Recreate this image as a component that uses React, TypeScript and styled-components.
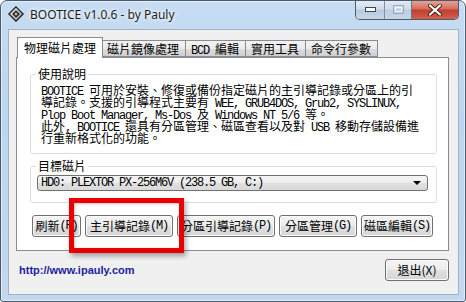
import React from 'react';
import styled, { createGlobalStyle } from 'styled-components';

const Global = createGlobalStyle`
  html, body { margin: 0; padding: 0; background: #ffffff; }
  * { box-sizing: border-box; }
  body { text-autospace: no-autospace; text-spacing-trim: space-all; }
`;

const CJK = `"Noto Sans CJK TC", "Noto Sans CJK SC", sans-serif`;

const Window = styled.div`
  position: relative;
  width: 466px;
  height: 302px;
  display: flex;
  flex-direction: column;
  padding: 0 6px 6px 7px;
  border: 1px solid #4a5a6d;
  border-radius: 7px 7px 3px 3px;
  background: linear-gradient(180deg, #c6dcf2 0, #bdd5ee 40%, #c3d8ef 100%);
  box-shadow: inset 0 0 0 1px rgba(255, 255, 255, 0.55);
  overflow: hidden;
`;

const TitleBar = styled.div`
  display: flex;
  align-items: flex-start;
  height: 28px;
`;

const AppIcon = styled.svg`
  margin-top: 5px;
  flex: none;
`;

const Title = styled.div`
  margin: 6px 0 0 6px;
  font-family: "Noto Sans", "Open Sans", sans-serif;
  font-size: 12px;
  line-height: 16px;
  color: #1b1b1b;
  text-shadow: 0 0 6px #ffffff, 0 0 3px #ffffff;
`;

const Controls = styled.div`
  display: flex;
  margin: -1px 0 0 auto;
  height: 20px;
  border: 1px solid #4f5b6c;
  border-top: none;
  border-radius: 0 0 5px 5px;
  overflow: hidden;
`;

const CtrlBtn = styled.div<{ w: number; kind?: 'close' | 'off' }>`
  width: ${({ w }) => w}px;
  display: flex;
  align-items: center;
  justify-content: center;
  border-left: ${({ kind }) => (kind ? '1px solid #6a7687' : 'none')};
  background: ${({ kind }) =>
    kind === 'close'
      ? 'linear-gradient(180deg, #e9a99b 0, #d4705f 45%, #c0402d 55%, #d0614e 100%)'
      : 'linear-gradient(180deg, #e6eef7 0, #d1dceb 45%, #b9c9dd 55%, #c8d6e7 100%)'};
  opacity: ${({ kind }) => (kind === 'off' ? 0.75 : 1)};
`;

const Client = styled.div`
  flex: 1;
  display: flex;
  flex-direction: column;
  padding: 7px 9px 0 7px;
  background: #f0f0f0;
  border: 1px solid #9fb2c7;
`;

const TabStrip = styled.div`
  display: flex;
  align-items: flex-end;
  height: 20px;
  padding-left: 1px;
  position: relative;
  z-index: 1;
`;

const Tab = styled.div<{ active?: boolean }>`
  height: ${({ active }) => (active ? 21 : 17)}px;
  margin-bottom: ${({ active }) => (active ? -1 : 0)}px;
  margin-right: ${({ active }) => (active ? -1 : 0)}px;
  padding: ${({ active }) => (active ? '3px 6px 0' : '1px 6px 0 5px')};
  border: 1px solid #898c95;
  border-bottom: ${({ active }) => (active ? 'none' : '1px solid #898c95')};
  border-left-width: ${({ active }) => (active ? 1 : 0)}px;
  background: ${({ active }) =>
    active ? '#ffffff' : 'linear-gradient(180deg, #f2f2f2 0, #ebebeb 50%, #dddddd 51%, #cfcfcf 100%)'};
  font-family: ${CJK};
  font-size: 12px;
  line-height: 14px;
  color: #000000;
  white-space: pre;
  position: relative;
  z-index: ${({ active }) => (active ? 2 : 1)};
`;

const Panel = styled.div`
  display: flex;
  flex-direction: column;
  padding: 9px 11px 13px 13px;
  background: #ffffff;
  border: 1px solid #898c95;
`;

const Group = styled.fieldset<{ pad: string }>`
  margin: 0;
  min-width: 0;
  padding: ${({ pad }) => pad};
  border: 1px solid #d5dfe5;
  border-radius: 3px;
  & + & {
    margin-top: 5px;
  }
`;

const Legend = styled.legend`
  padding: 0 2px;
  font-family: ${CJK};
  font-size: 12px;
  line-height: 14px;
  color: #000000;
`;

// half-width latin run, 6px per character like the dialog's bitmap font
const Lat = styled.span`
  font-family: "Liberation Mono", monospace;
  font-size: 12px;
  letter-spacing: -1.2px;
  line-height: 0;
`;

const Desc = styled.div`
  margin-left: 5px;
  font-family: ${CJK};
  font-size: 12px;
  line-height: 12px;
  color: #000000;
  white-space: pre;
`;

const Combo = styled.div`
  display: flex;
  align-items: center;
  height: 16px;
  margin: 0 3px 0 1px;
  padding: 0 6px 0 3px;
  border: 1px solid #707070;
  border-radius: 3px;
  background: linear-gradient(180deg, #f5f5f5 0, #ececec 50%, #e0e0e0 51%, #d9d9d9 100%);
  font-family: "Liberation Mono", monospace;
  font-size: 12px;
  letter-spacing: -1.2px;
  color: #000000;
  white-space: pre;
`;

const Arrow = styled.span`
  margin-left: auto;
  width: 0;
  height: 0;
  border-left: 4px solid transparent;
  border-right: 4px solid transparent;
  border-top: 4px solid #000000;
`;

const ButtonRow = styled.div`
  display: flex;
  gap: 4px;
  margin: 12px 0 0 2px;
`;

const Button = styled.div<{ w: number }>`
  width: ${({ w }) => w}px;
  height: 22px;
  display: flex;
  align-items: center;
  justify-content: center;
  border: 1px solid #707070;
  border-radius: 3px;
  background: linear-gradient(180deg, #f4f4f4 0, #ececec 50%, #e0e0e0 51%, #d6d6d6 100%);
  box-shadow: inset 0 0 0 1px #fbfbfb;
  font-family: ${CJK};
  font-size: 12px;
  line-height: 14px;
  color: #000000;
  white-space: pre;
`;

const BottomBar = styled.div`
  display: flex;
  align-items: center;
  justify-content: space-between;
  padding: 8px 0 0 3px;
`;

const Url = styled.div`
  font-family: "Liberation Sans", Arial, sans-serif;
  font-weight: bold;
  font-size: 11px;
  color: #1c1ca0;
`;

const Highlight = styled.div`
  position: absolute;
  left: 68px;
  top: 197px;
  width: 115px;
  height: 55px;
  border: 5px solid #e80000;
  box-shadow: 2px 3px 5px rgba(0, 0, 0, 0.35), inset 1px 1px 3px rgba(0, 0, 0, 0.25);
  pointer-events: none;
`;

const buttons: { w: number; cjk: string; key: string }[] = [
  { w: 49, cjk: '刷新', key: '(R)' },
  { w: 88, cjk: '主引導記錄', key: '(M)' },
  { w: 98, cjk: '分區引導記錄', key: '(P)' },
  { w: 78, cjk: '分區管理', key: '(G)' },
  { w: 72, cjk: '磁區編輯', key: '(S)' },
];

export default function App() {
  return (
    <>
      <Global />
      <Window>
        <TitleBar>
          <AppIcon width="16" height="16" viewBox="0 0 16 16">
            <defs>
              <linearGradient id="ig" x1="0" y1="0" x2="1" y2="1">
                <stop offset="0" stopColor="#f4f4f4" />
                <stop offset="1" stopColor="#8a8a8a" />
              </linearGradient>
            </defs>
            <path d="M8 0.8 L15.2 8 L8 15.2 L0.8 8 Z" fill="url(#ig)" stroke="#1a1a1a" strokeWidth="1.2" />
            <path d="M8 4.2 L11.8 8 L8 11.8 L4.2 8 Z" fill="#262626" />
            <path d="M8 6.3 L9.7 8 L8 9.7 L6.3 8 Z" fill="#bdbdbd" />
          </AppIcon>
          <Title>BOOTICE v1.0.6 - by Pauly</Title>
          <Controls>
            <CtrlBtn w={28}>
              <svg width="11" height="5" viewBox="0 0 11 5">
                <rect x="0.5" y="0.5" width="10" height="4" fill="#ffffff" stroke="#3c4656" />
              </svg>
            </CtrlBtn>
            <CtrlBtn w={27} kind="off">
              <svg width="11" height="9" viewBox="0 0 11 9">
                <rect x="0.5" y="0.5" width="10" height="8" fill="none" stroke="#8d99a9" />
                <rect x="2.5" y="2.5" width="6" height="4" fill="none" stroke="#ffffff" />
              </svg>
            </CtrlBtn>
            <CtrlBtn w={47} kind="close">
              <svg width="14" height="12" viewBox="0 0 14 12">
                <path d="M2 1.5 L12 10.5 M12 1.5 L2 10.5" stroke="#4a1a14" strokeWidth="4" strokeLinecap="round" />
                <path d="M2 1.5 L12 10.5 M12 1.5 L2 10.5" stroke="#ffffff" strokeWidth="2.2" strokeLinecap="round" />
              </svg>
            </CtrlBtn>
          </Controls>
        </TitleBar>

        <Client>
          <TabStrip>
            <Tab active>物理磁片處理</Tab>
            <Tab>磁片鏡像處理</Tab>
            <Tab><Lat>BCD </Lat>編輯</Tab>
            <Tab>實用工具</Tab>
            <Tab>命令行參數</Tab>
          </TabStrip>
          <Panel>
            <Group pad="3px 5px 9px 5px">
              <Legend>使用說明</Legend>
              <Desc>
                <Lat>BOOTICE </Lat>可用於安裝、修復或備份指定磁片的主引導記錄或分區上的引
                <br />
                導記錄。支援的引導程式主要有<Lat> WEE, GRUB4DOS, Grub2, SYSLINUX,</Lat>
                <br />
                <Lat>Plop Boot Manager, Ms-Dos </Lat>及<Lat> Windows NT 5/6 </Lat>等。
                <br />
                此外<Lat>, BOOTICE </Lat>還具有分區管理、磁區查看以及對<Lat> USB </Lat>移動存儲設備進
                <br />
                行重新格式化的功能。
              </Desc>
            </Group>
            <Group pad="2px 5px 11px 5px">
              <Legend>目標磁片</Legend>
              <Combo>
                HD0: PLEXTOR PX-256M6V (238.5 GB, C:)
                <Arrow />
              </Combo>
            </Group>
            <ButtonRow>
              {buttons.map((b) => (
                <Button key={b.key} w={b.w}>
                  {b.cjk}
                  <Lat>{b.key}</Lat>
                </Button>
              ))}
            </ButtonRow>
          </Panel>
          <BottomBar>
            <Url>http://www.ipauly.com</Url>
            <Button w={64}>退出(X)</Button>
          </BottomBar>
        </Client>
        <Highlight />
      </Window>
    </>
  );
}
